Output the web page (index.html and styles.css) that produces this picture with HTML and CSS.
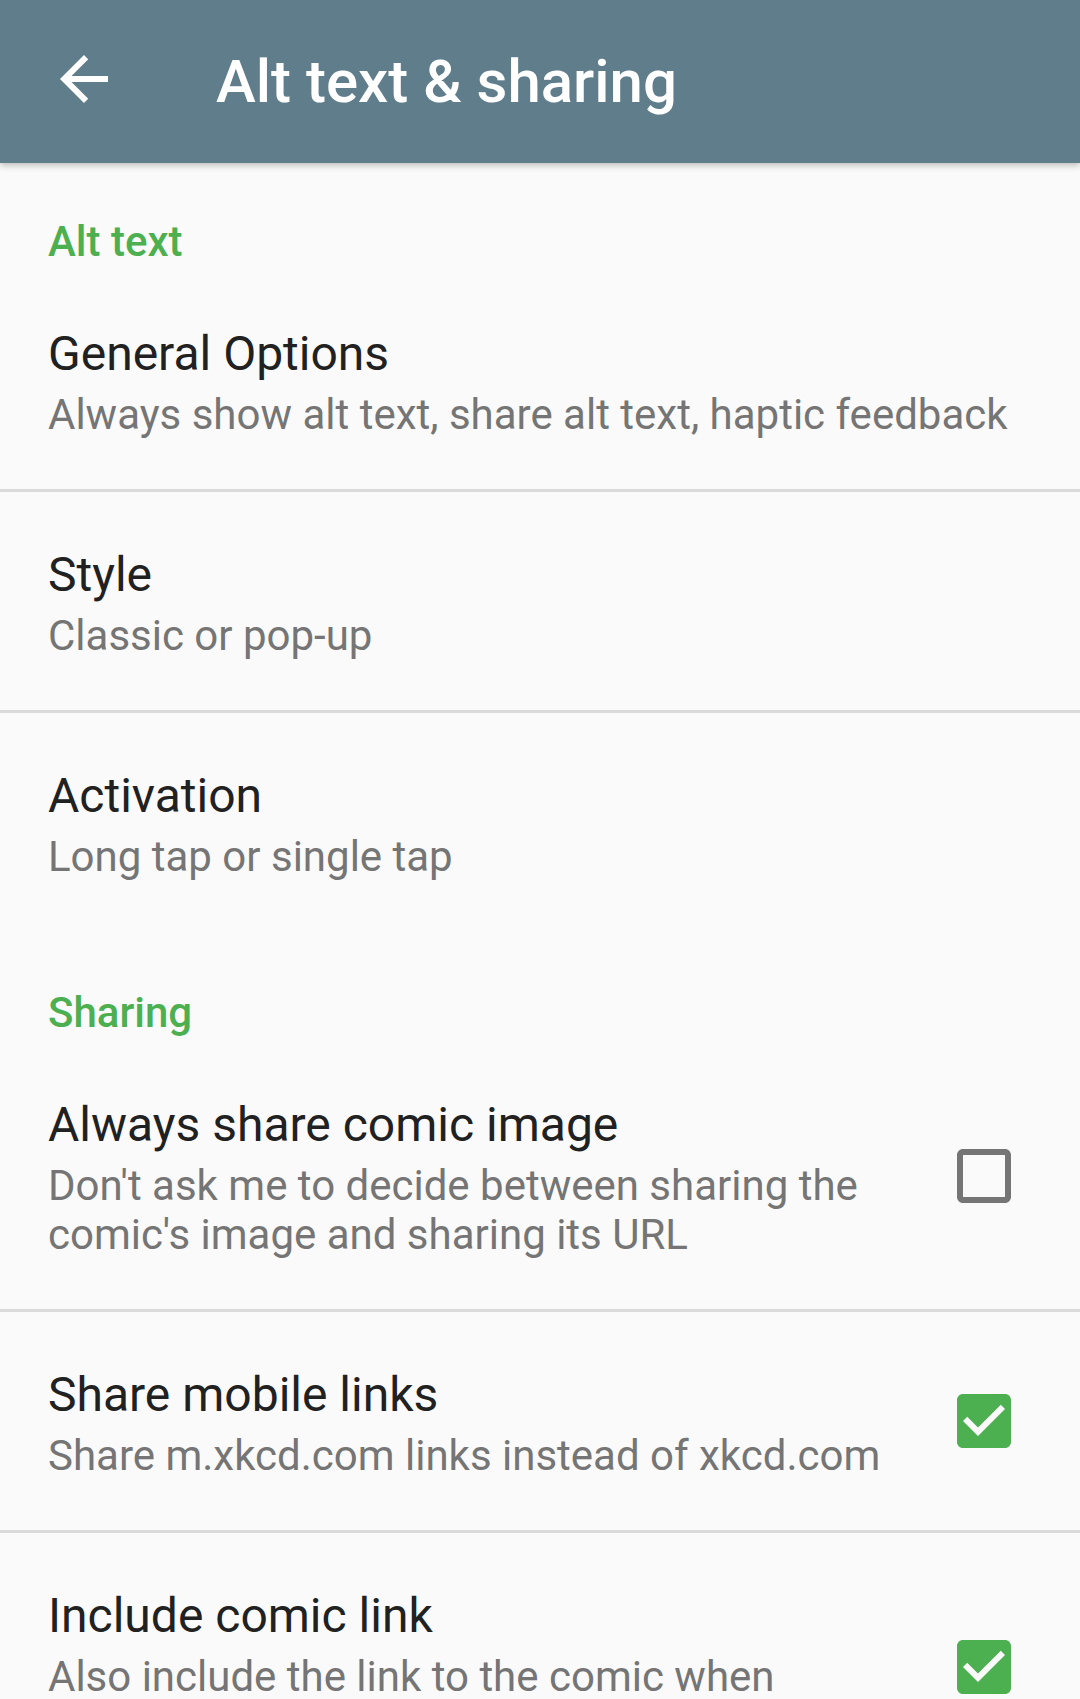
FILE: index.html
```html
<!DOCTYPE html>
<html lang="en">
<head>
<meta charset="utf-8">
<title>Alt text &amp; sharing</title>
<link rel="stylesheet" href="styles.css">
</head>
<body>
<header class="toolbar">
  <svg class="toolbar__back" viewBox="0 0 24 24" aria-hidden="true"><path d="M20 11H7.83l5.59-5.59L12 4l-8 8 8 8 1.41-1.41L7.83 13H20v-2z" fill="#ffffff"/></svg>
  <h1 class="toolbar__title">Alt text &amp; sharing</h1>
</header>
<main class="prefs">
  <div class="category">Alt text</div>
  <div class="pref pref--divided">
    <div class="pref__text">
      <div class="pref__title">General Options</div>
      <div class="pref__summary">Always show alt text, share alt text, haptic feedback</div>
    </div>
  </div>
  <div class="pref pref--divided">
    <div class="pref__text">
      <div class="pref__title">Style</div>
      <div class="pref__summary">Classic or pop-up</div>
    </div>
  </div>
  <div class="pref">
    <div class="pref__text">
      <div class="pref__title">Activation</div>
      <div class="pref__summary">Long tap or single tap</div>
    </div>
  </div>

  <div class="category category--spaced">Sharing</div>
  <div class="pref pref--divided">
    <div class="pref__text">
      <div class="pref__title">Always share comic image</div>
      <div class="pref__summary">Don't ask me to decide between sharing the comic's image and sharing its URL</div>
    </div>
    <svg class="pref__check" viewBox="3 3 18 18" aria-hidden="true"><path d="M19 5v14H5V5h14m0-2H5c-1.11 0-2 .9-2 2v14c0 1.1.89 2 2 2h14c1.1 0 2-.9 2-2V5c0-1.1-.9-2-2-2z" fill="#757575"/></svg>
  </div>
  <div class="pref pref--divided">
    <div class="pref__text">
      <div class="pref__title">Share mobile links</div>
      <div class="pref__summary">Share m.xkcd.com links instead of xkcd.com</div>
    </div>
    <svg class="pref__check" viewBox="3 3 18 18" aria-hidden="true"><path d="M19 3H5c-1.11 0-2 .9-2 2v14c0 1.1.89 2 2 2h14c1.11 0 2-.9 2-2V5c0-1.1-.89-2-2-2zm-9 14l-5-5 1.41-1.41L10 14.17l7.59-7.59L19 8l-9 9z" fill="#4caf50"/></svg>
  </div>
  <div class="pref">
    <div class="pref__text">
      <div class="pref__title">Include comic link</div>
      <div class="pref__summary">Also include the link to the comic when sharing the comic's image</div>
    </div>
    <svg class="pref__check" viewBox="3 3 18 18" aria-hidden="true"><path d="M19 3H5c-1.11 0-2 .9-2 2v14c0 1.1.89 2 2 2h14c1.11 0 2-.9 2-2V5c0-1.1-.89-2-2-2zm-9 14l-5-5 1.41-1.41L10 14.17l7.59-7.59L19 8l-9 9z" fill="#4caf50"/></svg>
  </div>
</main>
</body>
</html>
```
FILE: styles.css
```css
* {
  box-sizing: border-box;
}

html, body {
  margin: 0;
  padding: 0;
}

body {
  width: 1080px;
  height: 1699px;
  overflow: hidden;
  background: #fafafa;
  font-family: Roboto, "Noto Sans", "Liberation Sans", sans-serif;
}

.toolbar {
  position: relative;
  z-index: 1;
  height: 163px;
  display: flex;
  align-items: center;
  padding-left: 48px;
  background: #607d8b;
  box-shadow: 0 2px 7px rgba(0, 0, 0, 0.28);
}

.toolbar__back {
  flex: none;
  width: 72px;
  height: 72px;
  margin-bottom: 6px;
}

.toolbar__title {
  margin: 0 0 0 96px;
  font-size: 60px;
  font-weight: 500;
  line-height: 70px;
  color: #ffffff;
}

.category {
  padding: 54px 48px 5px;
  font-size: 42px;
  line-height: 49px;
  font-weight: 500;
  color: #4caf50;
}

.category--spaced {
  padding-top: 57px;
}

.pref {
  display: flex;
  align-items: center;
  padding: 0 48px;
}

.pref--divided {
  border-bottom: 3px solid #dadada;
}

.pref__text {
  flex: 1;
  min-width: 0;
  padding: 55px 0 50px;
}

.pref__title {
  font-size: 48px;
  line-height: 56px;
  color: #212121;
}

.pref__summary {
  margin-top: 8px;
  font-size: 42px;
  line-height: 49px;
  color: #757575;
}

.pref__check {
  flex: none;
  width: 54px;
  height: 54px;
  margin: 0 21px 0 57px;
}
```
